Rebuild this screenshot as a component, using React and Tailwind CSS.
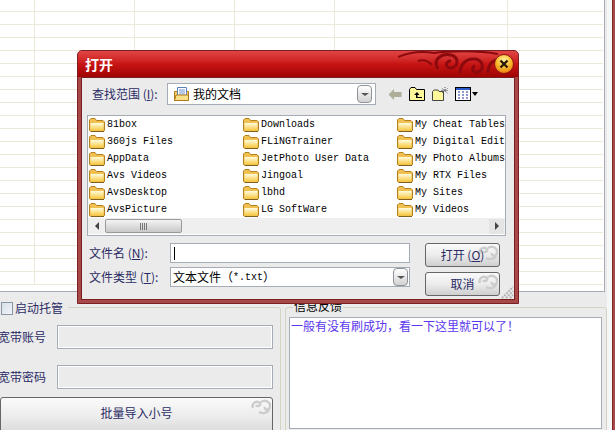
import React from 'react';

const cols = [
  ['81box', '360js Files', 'AppData', 'Avs Videos', 'AvsDesktop', 'AvsPicture'],
  ['Downloads', 'FLiNGTrainer', 'JetPhoto User Data', 'Jingoal', 'lbhd', 'LG SoftWare'],
  ['My Cheat Tables', 'My Digital Editions', 'My Photo Albums', 'My RTX Files', 'My Sites', 'My Videos'],
];

const rows = Array.from({ length: 22 }, (_, i) => i);

const Folder = () => (
  <svg width="16" height="14" viewBox="0 0 16 14" className="shrink-0">
    <defs>
      <linearGradient id="fold" x1="0" y1="0" x2="0" y2="1">
        <stop offset="0" stopColor="#fffde0" />
        <stop offset="1" stopColor="#f6c840" />
      </linearGradient>
    </defs>
    <path d="M0.5 12.5V2L2 0.5H6L7.5 2.5H14L15.5 4V12.5L14 13.5H2Z" fill="#f0c050" stroke="#b5801e" />
    <path d="M1.5 5H14.5V12.5H1.5Z" fill="url(#fold)" />
    <path d="M2 13.5H15" stroke="#806020" />
  </svg>
);

const Swirl = ({ className }) => (
  <svg width="20" height="16" viewBox="0 0 20 16" fill="none" stroke="#cdcdcd" strokeWidth="2.5" className={className}>
    <path d="M2 9C0 4 6 1 9 4C10 7 6 8 5 6" />
    <path d="M10 3C14 0 20 3 19 8C18 12 13 11 14 8" />
    <path d="M8 13C12 15 16 14 18 11" />
  </svg>
);

const Caret = () => (
  <span className="w-[15px] h-[18px] shrink-0 rounded-sm border border-[#8f949a] bg-gradient-to-b from-[#ffffff] to-[#d2d2d2] flex items-center justify-center">
    <span className="w-0 h-0 border-x-[4px] border-x-transparent border-t-[3px] border-t-[#555555]" />
  </span>
);

const DlgButton = ({ children }) => (
  <button className="relative w-[75px] h-[24px] rounded-[3px] border border-[#666666] bg-gradient-to-b from-[#fafafa] via-[#ececec] to-[#cfcfcf] text-[12px] text-[#2b2c66]">
    <Swirl className="absolute top-px right-px" />
    <span className="relative">{children}</span>
  </button>
);

const FieldInput = ({ children }) => (
  <div className="w-[240px] h-[20px] bg-white border border-[#a5acb5] flex items-center pl-[2px] text-[12px] text-black">
    {children}
  </div>
);

export default function App() {
  return (
    <div className="relative w-[615px] h-[430px] overflow-hidden flex bg-[#ebebeb] font-['Noto_Sans_CJK_SC','Liberation_Sans',sans-serif]">
      <div className="w-[607px] shrink-0 flex flex-col">
        {/* grid */}
        <div className="w-[605px] h-[292px] shrink-0 bg-white border-r border-b border-[#a5acb5] pr-px overflow-hidden">
          {rows.map((r) => (
            <div
              key={r}
              className={`grid grid-cols-[35px_100px_100px_100px_173px_95px] border-b border-[#ece9d8] ${r === 0 ? 'h-[12px]' : 'h-[13px]'}`}
            >
              {[0, 1, 2, 3, 4].map((c) => (
                <div key={c} className="border-r border-[#ece9d8]" />
              ))}
            </div>
          ))}
        </div>

        {/* bottom panels */}
        <div className="flex-1 flex gap-[4px] pt-[7px] min-h-0 overflow-hidden">
          <fieldset className="w-[281px] h-[160px] shrink-0 border border-l-0 border-[#d3d3c3] rounded-tr-[3px] pr-[7px]">
            <legend className="h-[16px] pl-px pr-[5px] flex items-end gap-[2px] text-[12px] leading-[14px] text-[#2b2c66]">
              <span className="w-[12px] h-[13px] border border-[#8a96a6] bg-gradient-to-br from-[#d5dfe9] to-[#f2f5f8]" />
              启动托管
            </legend>
            <div className="flex items-center justify-between h-[24px] mt-[10px] text-[12px] text-[#2b2c66]">
              <span className="-ml-[2px]">宽带账号</span>
              <div className="w-[216px] h-full border border-[#a5acb5] bg-[#ebebeb] shadow-[inset_0_0_0_1px_#ffffff]" />
            </div>
            <div className="flex items-center justify-between h-[24px] mt-[16px] text-[12px] text-[#2b2c66]">
              <span className="-ml-[2px]">宽带密码</span>
              <div className="w-[216px] h-full border border-[#a5acb5] bg-[#ebebeb] shadow-[inset_0_0_0_1px_#ffffff]" />
            </div>
            <button className="relative w-[273px] h-[40px] mt-[8px] rounded-t-[3px] border border-[#666666] bg-gradient-to-b from-[#fafafa] via-[#ececec] to-[#d6d6d6] pb-[9px] text-[12px] text-[#2b2c66]">
              批量导入小号
              <Swirl className="absolute top-px right-px" />
            </button>
          </fieldset>

          <fieldset className="w-[322px] h-[160px] shrink-0 border border-[#d3d3c3] rounded-t-[3px] px-[3px]">
            <legend className="ml-[4px] px-px h-[16px] text-[12px] leading-[14px] text-black">信息反馈</legend>
            <div className="w-[313px] h-[112px] mt-[2px] bg-white border border-[#a5acb5] pl-px text-[12px] leading-[15px] text-[#5a36f0]">
              {'一般有没有刷成功\uFF0C看一下这里就可以了\uFF01'}
            </div>
          </fieldset>
        </div>
      </div>

      <div className="w-[5px] shrink-0 bg-[#f6f6f6]" />
      <div className="w-[3px] shrink-0 bg-[#a84a4a] border-l border-[#7d2626]" />

      {/* open dialog */}
      <div className="absolute left-[77px] top-[50px] w-[442px] h-[254px] flex flex-col rounded-t-[5px] border border-[#7a2020] bg-[#a84848] px-[3px] pb-[3px]">
        <div className="relative -mx-[3px] h-[26px] shrink-0 rounded-t-[4px] bg-gradient-to-b from-[#e04444] via-[#c81414] to-[#a00404] flex items-center pl-[7px] pt-px overflow-hidden">
          <span className="text-[14px] font-bold text-white">打开</span>
          <svg width="120" height="26" viewBox="0 0 120 26" fill="none" stroke="#8c0a0e" strokeWidth="3" className="absolute right-0 top-0">
            <path d="M0 6C12 1 24 0 36 2C48 0 80 -1 100 3" strokeWidth="2" />
            <path d="M40 18C34 8 44 2 53 4C61 6 61 16 53 17C47 17 47 10 53 10" />
            <path d="M62 22C62 14 68 7 77 8C85 9 87 18 80 21C74 22 73 16 77 15" />
            <path d="M90 22C90 12 97 7 104 9C110 11 110 19 105 20" />
            <path d="M20 10C26 8 30 10 34 14" strokeWidth="2" />
          </svg>
          <svg width="20" height="20" viewBox="0 0 20 20" className="absolute right-[4px] top-[3px]">
            <defs>
              <radialGradient id="closeBtn" cx="0.5" cy="0.3" r="0.7">
                <stop offset="0" stopColor="#fff3a0" />
                <stop offset="0.55" stopColor="#f9b92c" />
                <stop offset="1" stopColor="#e87a10" />
              </radialGradient>
            </defs>
            <circle cx="10" cy="10" r="9.5" fill="url(#closeBtn)" stroke="#8a1010" />
            <path d="M6.5 6.5L13.5 13.5M13.5 6.5L6.5 13.5" stroke="#2a1a08" strokeWidth="2.4" />
          </svg>
        </div>

        <div className="relative flex-1 flex flex-col border border-[#7a2020] bg-[#ebebeb] text-[12px]">
          {/* look in row */}
          <div className="flex items-center h-[22px] mt-[5px] ml-[10px]">
            <span className="w-[75px] text-[#2b2c66] whitespace-nowrap">查找范围 (<span className="underline">I</span>):</span>
            <div className="w-[209px] h-full border border-[#a5acb5] bg-white flex items-center gap-[3px] pl-[5px] pr-[3px] text-black">
              <svg width="17" height="15" viewBox="0 0 17 15">
                <path d="M1.5 13.5V4.5H15.5V13.5Z" fill="#f8d468" stroke="#b07a1c" />
                <path d="M4.5 10V0.5H13.5V10Z" fill="#ffffff" stroke="#5a82b8" />
                <path d="M6 3H12M6 5H12M6 7H12" stroke="#6c94d0" />
                <path d="M1.5 13.5L3 8H15.5V13.5Z" fill="#fbe08a" stroke="#b07a1c" />
              </svg>
              我的文档
              <span className="ml-auto"><Caret /></span>
            </div>
            <div className="flex items-center ml-[12px]">
              <svg width="14" height="13" viewBox="0 0 14 13">
                <path d="M0.5 6.5L6 1V4H13.5V9H6V12Z" fill="#adad98" />
              </svg>
              <svg width="16" height="14" viewBox="0 0 16 14" className="ml-[7px]">
                <path d="M0.5 13.5V2.5L2 0.5H6L7.5 2.5H15.5V13.5Z" fill="#fff89a" stroke="#000000" />
                <path d="M8 5L5 8H7V11H13V10H8.5V8H10.5Z" fill="#000000" />
              </svg>
              <svg width="16" height="14" viewBox="0 0 16 14" className="ml-[7px]">
                <path d="M0.5 13.5V4.5L2 3H6L7 4.5H11.5V13.5Z" fill="#fff89a" stroke="#444444" />
                <path d="M13 0V3M10 1.5L15.5 6M15.5 1.5L10 6M9.5 3.5H16" stroke="#555555" strokeDasharray="1 1" />
              </svg>
              <svg width="23" height="14" viewBox="0 0 23 14" className="ml-[7px]">
                <rect x="0.5" y="0.5" width="15" height="13" fill="#ffffff" stroke="#000000" />
                <rect x="1" y="1" width="14" height="2" fill="#2a5ac8" />
                <path d="M3 5H5M7 5H9M11 5H13M3 8H5M7 8H9M11 8H13M3 11H5M7 11H9M11 11H13" stroke="#2030a0" />
                <path d="M17 5H23L20 9Z" fill="#000000" />
              </svg>
            </div>
          </div>

          {/* file list */}
          <div className="w-[419px] h-[121px] mt-[10px] ml-[5px] shrink-0 border border-[#a5acb5] bg-white flex flex-col">
            <div className="grid grid-flow-col grid-rows-6 grid-cols-[154px_154px_109px] h-[102px] shrink-0 overflow-hidden font-['Liberation_Mono',monospace] text-[10px] text-black">
              {cols.flat().map((name) => (
                <div key={name} className="h-[17px] flex items-center gap-[2px] pl-px whitespace-nowrap overflow-hidden">
                  <Folder />
                  {name}
                </div>
              ))}
            </div>
            <div className="h-[16px] bg-[#efefef] flex items-center">
              <span className="w-[17px] flex justify-center pl-[1px]">
                <span className="w-0 h-0 border-y-[4px] border-y-transparent border-r-[4px] border-r-[#444444]" />
              </span>
              <div className="w-[77px] h-[14px] rounded-[2px] border border-[#9a9a9a] bg-gradient-to-b from-[#f4f4f4] to-[#c8c8c8] flex items-center justify-center gap-px">
                <span className="w-px h-[7px] bg-[#777777]" />
                <span className="w-px h-[7px] bg-[#777777]" />
                <span className="w-px h-[7px] bg-[#777777]" />
                <span className="w-px h-[7px] bg-[#777777]" />
              </div>
              <span className="ml-auto mr-px w-[15px] h-[15px] bg-[#e4e4e4] flex items-center justify-center">
                <span className="w-0 h-0 border-y-[4px] border-y-transparent border-l-[4px] border-l-[#444444]" />
              </span>
            </div>
          </div>

          {/* file name and type */}
          <div className="flex mt-[7px] ml-[7px]">
            <div className="w-[322px] flex flex-col gap-[4px] text-[#2b2c66]">
              <div className="flex items-center">
                <span className="w-[81px] whitespace-nowrap">文件名 (<span className="underline">N</span>):</span>
                <FieldInput><span className="ml-px w-px h-[13px] bg-black" /></FieldInput>
              </div>
              <div className="flex items-center">
                <span className="w-[81px] whitespace-nowrap">文件类型 (<span className="underline">T</span>):</span>
                <FieldInput>
                  {'文本文件\uFF08'}<span className="font-['Liberation_Mono',monospace] text-[10px]">*.txt</span>{'\uFF09'}
                  <span className="ml-auto mr-[1px] h-[16px] flex items-center"><Caret /></span>
                </FieldInput>
              </div>
            </div>
            <div className="ml-[14px] flex flex-col gap-[5px]">
              <DlgButton>打开 (<span className="underline">O</span>)</DlgButton>
              <DlgButton>取消</DlgButton>
            </div>
          </div>

          <svg width="13" height="13" viewBox="0 0 13 13" className="absolute right-0 bottom-0">
            <path d="M1 12L12 1M5 12L12 5M9 12L12 9" stroke="#b4b4b4" strokeWidth="2" strokeDasharray="2 1" />
          </svg>
        </div>
      </div>
    </div>
  );
}
